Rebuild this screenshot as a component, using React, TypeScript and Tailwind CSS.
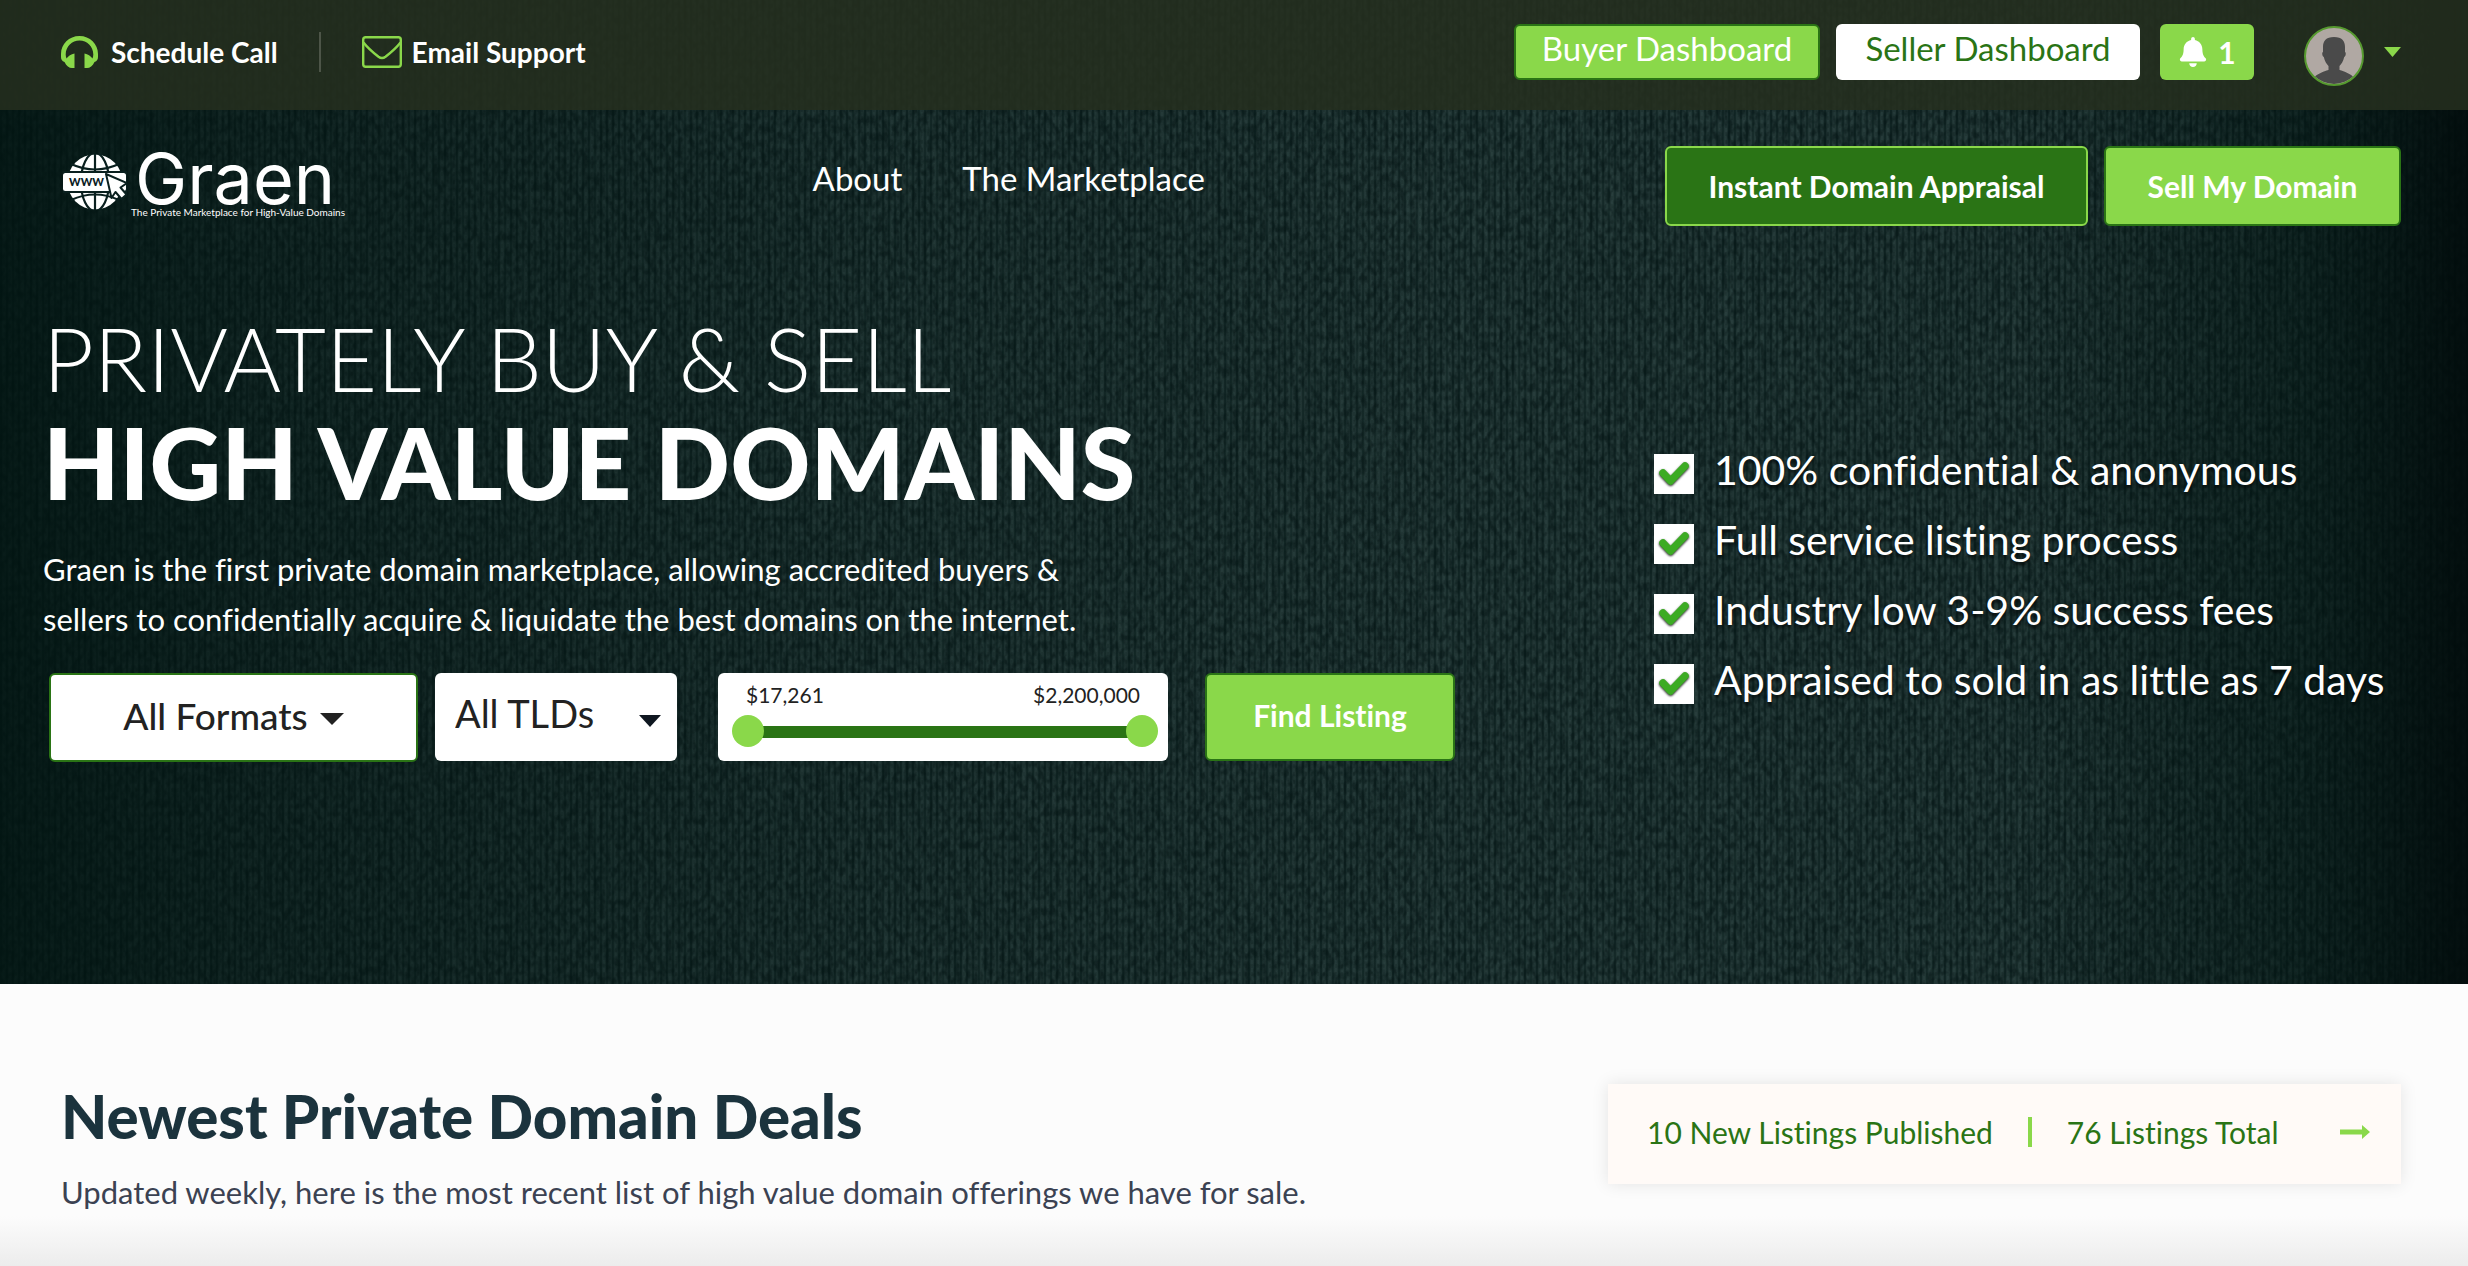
import { useState } from "react";
import { FaBell } from "react-icons/fa";

const BENEFITS = [
  "100% confidential & anonymous",
  "Full service listing process",
  "Industry low 3-9% success fees",
  "Appraised to sold in as little as 7 days",
];

const MIN_PRICE = 17261;
const MAX_PRICE = 2200000;

const formatPrice = (value: number) => `$${value.toLocaleString("en-US")}`;

function FabricBackground() {
  return (
    <div className="absolute inset-0 -z-10 bg-[#162928]">
      <svg className="h-full w-full" aria-hidden="true">
        <defs>
          <filter
            id="weave"
            x="0"
            y="0"
            width="100%"
            height="100%"
            colorInterpolationFilters="sRGB"
          >
            <feTurbulence
              type="fractalNoise"
              baseFrequency="0.18 0.12"
              numOctaves="2"
              seed="4"
            />
            <feColorMatrix values="0 0 0 0 0.01  0 0 0 0 0.07  0 0 0 0 0.07  3 0 0 0 -1.1" />
          </filter>
          <filter
            id="threads"
            x="0"
            y="0"
            width="100%"
            height="100%"
            colorInterpolationFilters="sRGB"
          >
            <feTurbulence
              type="fractalNoise"
              baseFrequency="0.15 0.012"
              numOctaves="2"
              seed="9"
            />
            <feColorMatrix values="0 0 0 0 0.2  0 0 0 0 0.29  0 0 0 0 0.28  2 0 0 0 -0.7" />
          </filter>
          <pattern
            id="ribs"
            width="6"
            height="8"
            patternUnits="userSpaceOnUse"
          >
            <rect width="2" height="8" fill="#001312" />
            <rect x="3" width="2" height="4" fill="#2c4342" />
          </pattern>
          <linearGradient id="vignette">
            <stop offset="0" stopColor="#001310" stopOpacity="0.8" />
            <stop offset="0.1" stopColor="#001310" stopOpacity="0.5" />
            <stop offset="0.35" stopColor="#001310" stopOpacity="0.15" />
            <stop offset="0.6" stopColor="#001310" stopOpacity="0" />
            <stop offset="0.82" stopColor="#001310" stopOpacity="0" />
            <stop offset="0.93" stopColor="#001310" stopOpacity="0.5" />
            <stop offset="1" stopColor="#000a0a" stopOpacity="0.9" />
          </linearGradient>
        </defs>
        <rect width="100%" height="100%" fill="#1f3332" />
        <rect width="100%" height="100%" fill="url(#ribs)" opacity="0.45" />
        <rect width="100%" height="100%" filter="url(#threads)" opacity="0.3" />
        <rect width="100%" height="100%" filter="url(#weave)" opacity="0.5" />
        <rect width="100%" height="100%" fill="url(#vignette)" />
      </svg>
    </div>
  );
}

function HeadphonesIcon() {
  return (
    <svg
      viewBox="0 0 37 32"
      className="h-8 w-[37px]"
      fill="#8ad84a"
      aria-hidden="true"
    >
      <path d="M0 18C0 8 8 0 18.500 0S37 8 37 18v3c0 2.500-1 4-3.500 5C31.500 30 29 32 26 32h-2.500V17.500c3.500.6 6 2.500 8 5C32 21 32.300 20 32.300 18.500 32.300 10.500 26 4.500 18.500 4.500S4.700 10.500 4.700 18.500c0 1.500.3 2.500.8 4 2-2.500 4.500-4.400 8-5V32H11c-3 0-5.500-2-7.500-6C1 25 0 23.500 0 21z" />
    </svg>
  );
}

function EnvelopeIcon() {
  return (
    <svg
      viewBox="0 0 40 32"
      className="h-8 w-10"
      fill="none"
      stroke="#8ad84a"
      strokeWidth="2.4"
      aria-hidden="true"
    >
      <rect x="1.200" y="1.200" width="37.600" height="29.600" rx="2.500" />
      <path d="M1.500 6.500C5 11 11 16.500 16.500 20.800q3.500 2.600 7 0C29 16.500 35 11 38.500 6.500" />
    </svg>
  );
}

function Caret({ className }: { className: string }) {
  return (
    <svg
      viewBox="0 0 24 12"
      preserveAspectRatio="none"
      className={className}
      fill="currentColor"
      aria-hidden="true"
    >
      <path d="M0 0h24L12 12z" />
    </svg>
  );
}

function Avatar() {
  return (
    <svg viewBox="0 0 60 60" className="size-[60px]" aria-hidden="true">
      <defs>
        <clipPath id="avatar-clip">
          <circle cx="30" cy="30" r="28" />
        </clipPath>
      </defs>
      <circle cx="30" cy="30" r="29" fill="#b0a8a3" />
      <g clipPath="url(#avatar-clip)" fill="#4a4a4a">
        <path d="M30 11c8 0 11 4 11 10v5c1.200.3 1 4-.8 5-.8 4-2.700 7-4.700 9v4c5 1.500 11 3.500 15 8v8h-41v-8c4-4.500 10-6.500 15-8v-4c-2-2-3.900-5-4.700-9-1.800-1-2-4.700-.8-5v-5c0-6 3-10 11-10z" />
      </g>
      <circle cx="30" cy="30" r="29" fill="none" stroke="#569a2f" strokeWidth="2" />
    </svg>
  );
}

function GlobeIcon() {
  return (
    <svg viewBox="0 0 64 56" className="h-14 w-16" aria-hidden="true">
      <circle cx="32" cy="28" r="27.500" fill="#fff" />
      <g fill="none" stroke="#0a201f" strokeWidth="2.200">
        <path d="M32 0v56" />
        <ellipse cx="32" cy="28" rx="14" ry="29" />
        <path d="M8 10q24 11 48 0M8 46q24-11 48 0" />
      </g>
      <rect x="-1" y="17" width="66" height="22" fill="#0a201f" />
      <rect y="19" width="63" height="18" rx="2.500" fill="#fff" />
      <text
        x="6"
        y="32"
        fill="#0a201f"
        className="font-['Lato',sans-serif] text-[11px] font-black"
      >
        WWW
      </text>
      <path
        d="M43 20l21 9-6.500 4.500 6 7-5 4.500-6-7-4 6z"
        fill="#fff"
        stroke="#0a201f"
        strokeWidth="2"
        strokeLinejoin="round"
      />
    </svg>
  );
}

function Logo() {
  return (
    <a href="#" className="flex gap-3">
      <GlobeIcon />
      <span className="flex flex-col gap-0.5">
        <span className="-ml-1 font-['Inter',sans-serif] text-[70px] leading-[50px]">
          Graen
        </span>
        <span className="-ml-2 text-[10px] leading-3">
          The Private Marketplace for High-Value Domains
        </span>
      </span>
    </a>
  );
}

function CheckIcon() {
  return (
    <span className="flex size-10 shrink-0 items-center justify-center bg-white">
      <svg
        viewBox="0 0 30 26"
        className="h-[26px] w-[30px] drop-shadow-[0_1px_1px_rgba(0,0,0,0.9)]"
        fill="none"
        stroke="#3cab24"
        strokeWidth="7.500"
        strokeLinecap="round"
        strokeLinejoin="round"
        aria-hidden="true"
      >
        <path d="M4 12l7.500 8L26 5" />
      </svg>
    </span>
  );
}

function TopBar() {
  return (
    <div className="flex h-[110px] items-center justify-between bg-[#262f1e]/85 pb-1.5 pl-[61px] pr-[67px]">
      <div className="flex items-center gap-[41px] text-[28px] font-bold">
        <a href="#" className="flex items-center gap-[13px]">
          <HeadphonesIcon />
          Schedule Call
        </a>
        <div className="h-10 w-0.5 bg-[#4d5548]" />
        <a href="#" className="flex items-center gap-2.5">
          <EnvelopeIcon />
          Email Support
        </a>
      </div>
      <div className="flex items-center">
        <button
          type="button"
          className="flex h-14 w-[306px] items-center justify-center rounded-md border-2 border-[#2a7415] bg-[#8ad84a] pb-1.5 text-[33px]"
        >
          Buyer Dashboard
        </button>
        <button
          type="button"
          className="ml-4 flex h-14 w-[304px] items-center justify-center rounded-md bg-white pb-1.5 text-[33px] text-[#2a7415]"
        >
          Seller Dashboard
        </button>
        <button
          type="button"
          aria-label="Notifications"
          className="ml-5 flex h-14 w-[94px] items-center justify-center gap-2.5 rounded-md bg-[#8ad84a] text-[30px] font-bold"
        >
          <FaBell className="size-[30px]" />1
        </button>
        <button
          type="button"
          aria-label="Account menu"
          className="ml-[50px] mt-2 flex items-center gap-5"
        >
          <Avatar />
          <Caret className="mb-2 h-2.5 w-[17px] text-[#8ad84a]" />
        </button>
      </div>
    </div>
  );
}

function MainNav() {
  return (
    <div className="flex pl-[63px] pr-[67px] pt-9">
      <div className="pt-2">
        <Logo />
      </div>
      <nav className="ml-[20%] flex gap-[60px] text-[33px] leading-[64px]">
        <a href="#">About</a>
        <a href="#">The Marketplace</a>
      </nav>
      <div className="ml-auto flex gap-4 text-[30px] font-bold">
        <button
          type="button"
          className="h-20 w-[423px] rounded-md border-2 border-[#8ad84a] bg-[#2a7415]"
        >
          Instant Domain Appraisal
        </button>
        <button
          type="button"
          className="h-20 w-[297px] rounded-md border-2 border-[#2a7415] bg-[#8ad84a]"
        >
          Sell My Domain
        </button>
      </div>
    </div>
  );
}

const RANGE_CLASS =
  "pointer-events-none col-start-1 row-start-1 h-8 w-full appearance-none bg-transparent [&::-webkit-slider-thumb]:pointer-events-auto [&::-webkit-slider-thumb]:size-8 [&::-webkit-slider-thumb]:appearance-none [&::-webkit-slider-thumb]:rounded-full [&::-webkit-slider-thumb]:bg-[#8ad84a]";

function PriceRange() {
  const [low, setLow] = useState(MIN_PRICE);
  const [high, setHigh] = useState(MAX_PRICE);

  return (
    <div className="ml-[41px] h-[88px] w-[450px] rounded-md bg-white pl-3.5 pr-2.5 pt-2.5 text-[#222]">
      <div className="flex justify-between pl-3.5 pr-[18px] text-[21px] leading-6">
        <span>{formatPrice(low)}</span>
        <span>{formatPrice(high)}</span>
      </div>
      <div className="mt-2 grid items-center">
        <div className="col-start-1 row-start-1 mx-4 mt-0.5 h-3 bg-[#2a7415]" />
        <input
          type="range"
          aria-label="Minimum price"
          min={MIN_PRICE}
          max={MAX_PRICE}
          value={low}
          onChange={(e) => setLow(Math.min(Number(e.target.value), high))}
          className={RANGE_CLASS}
        />
        <input
          type="range"
          aria-label="Maximum price"
          min={MIN_PRICE}
          max={MAX_PRICE}
          value={high}
          onChange={(e) => setHigh(Math.max(Number(e.target.value), low))}
          className={RANGE_CLASS}
        />
      </div>
    </div>
  );
}

function SearchForm() {
  return (
    <form className="ml-1.5 mt-[29px] flex">
      <button
        type="button"
        className="flex h-[89px] w-[369px] items-center justify-center gap-3 rounded-md border-2 border-[#2a7415] bg-white pb-1 text-[37px] font-medium text-[#222]"
      >
        All Formats
        <Caret className="mt-1.5 h-3 w-6" />
      </button>
      <div className="relative ml-[17px]">
        <select
          aria-label="TLD"
          className="h-[88px] w-[242px] appearance-none rounded-md bg-white pb-2 pl-5 text-[38px] text-[#222]"
        >
          <option>All TLDs</option>
        </select>
        <Caret className="pointer-events-none absolute right-4 top-[42px] h-3 w-[22px] text-[#0f1720]" />
      </div>
      <PriceRange />
      <button
        type="button"
        className="ml-[37px] h-[88px] w-[250px] rounded-md border-2 border-[#2a7415] bg-[#8ad84a] pb-1 text-[30px] font-bold"
      >
        Find Listing
      </button>
    </form>
  );
}

function Hero() {
  return (
    <div className="flex justify-between pb-[222px] pl-[43px] pr-[67px] pt-20">
      <div>
        <h1 className="text-[88px] font-light leading-[104px]">
          PRIVATELY BUY & SELL
          <strong className="block text-[99px] font-black leading-[104px]">
            HIGH VALUE DOMAINS
          </strong>
        </h1>
        <p className="mt-[30px] text-[31px] leading-[50px]">
          Graen is the first private domain marketplace, allowing accredited
          buyers &
          <br />
          sellers to confidentially acquire & liquidate the best domains on the
          internet.
        </p>
        <SearchForm />
      </div>
      <ul className="flex w-[747px] flex-col gap-[30px] pt-[148px]">
        {BENEFITS.map((benefit) => (
          <li key={benefit} className="flex h-10 gap-5">
            <CheckIcon />
            <span className="text-[41px] leading-8 [text-shadow:0_3px_3px_rgba(0,0,0,0.6)]">
              {benefit}
            </span>
          </li>
        ))}
      </ul>
    </div>
  );
}

function NewestDeals() {
  return (
    <section className="flex items-start justify-between pl-[61px] pr-[67px] pt-24">
      <div>
        <h2 className="text-[60px] font-black leading-[72px] text-[#1b333d]">
          Newest Private Domain Deals
        </h2>
        <p className="mt-5 text-[31px] leading-10 text-[#3b4252]">
          Updated weekly, here is the most recent list of high value domain
          offerings we have for sale.
        </p>
      </div>
      <a
        href="#"
        className="mt-1 flex h-[100px] w-[793px] items-center bg-[#fffaf7] pb-1 pl-[39px] pr-[31px] text-[30px] text-[#2a7415] shadow-[0_0_16px_rgba(0,0,0,0.1)]"
      >
        10 New Listings Published
        <span className="mx-[35px] h-[30px] w-1 bg-[#8ad84a]" />
        76 Listings Total
        <svg
          viewBox="0 0 30 14"
          className="ml-auto h-3.5 w-[30px]"
          fill="#8ad84a"
          aria-hidden="true"
        >
          <path d="M0 4.500h22V0l8 7-8 7V9.500H0z" />
        </svg>
      </a>
    </section>
  );
}

export default function App() {
  return (
    <div className="flex min-h-screen flex-col bg-[#fcfcfc] font-['Lato',sans-serif] [font-variant-ligatures:no-common-ligatures]">
      <header className="relative isolate text-white">
        <FabricBackground />
        <TopBar />
        <MainNav />
        <Hero />
      </header>
      <NewestDeals />
      <div className="mt-auto h-[50px] bg-linear-to-t from-[#ececec] to-[#fcfcfc]" />
    </div>
  );
}
